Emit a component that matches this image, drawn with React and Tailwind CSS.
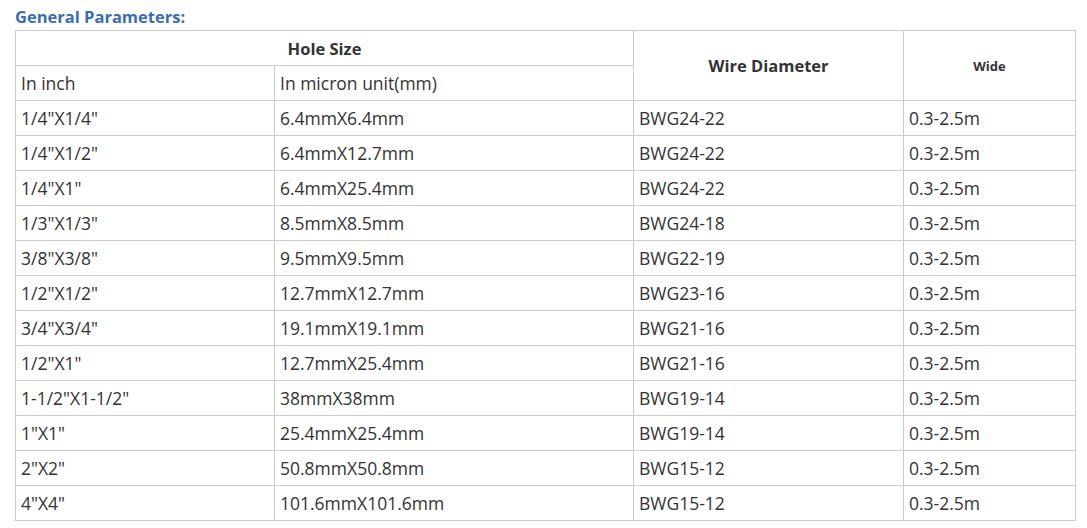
const rows = [
  ['1/4"X1/4"', '6.4mmX6.4mm', 'BWG24-22', '0.3-2.5m'],
  ['1/4"X1/2"', '6.4mmX12.7mm', 'BWG24-22', '0.3-2.5m'],
  ['1/4"X1"', '6.4mmX25.4mm', 'BWG24-22', '0.3-2.5m'],
  ['1/3"X1/3"', '8.5mmX8.5mm', 'BWG24-18', '0.3-2.5m'],
  ['3/8"X3/8"', '9.5mmX9.5mm', 'BWG22-19', '0.3-2.5m'],
  ['1/2"X1/2"', '12.7mmX12.7mm', 'BWG23-16', '0.3-2.5m'],
  ['3/4"X3/4"', '19.1mmX19.1mm', 'BWG21-16', '0.3-2.5m'],
  ['1/2"X1"', '12.7mmX25.4mm', 'BWG21-16', '0.3-2.5m'],
  ['1-1/2"X1-1/2"', '38mmX38mm', 'BWG19-14', '0.3-2.5m'],
  ['1"X1"', '25.4mmX25.4mm', 'BWG19-14', '0.3-2.5m'],
  ['2"X2"', '50.8mmX50.8mm', 'BWG15-12', '0.3-2.5m'],
  ['4"X4"', '101.6mmX101.6mm', 'BWG15-12', '0.3-2.5m'],
]

const cell = 'border border-[#cccccc] h-[35px] px-[5px] pt-[2px] pb-0 align-middle leading-none'

export default function App() {
  return (
    <div className="bg-white min-h-screen pl-[15px] pt-[5px] text-[#333333] font-['Open_Sans',sans-serif]">
      <h2 className="text-[16.5px] leading-[24px] font-bold text-[#3a6db0] m-0">General Parameters:</h2>
      <table className="border-collapse mt-[1px] w-[1060px] table-fixed text-[17.5px]">
        <colgroup>
          <col className="w-[259px]" />
          <col className="w-[359px]" />
          <col className="w-[270px]" />
          <col className="w-[172px]" />
        </colgroup>
        <tbody>
          <tr>
            <td colSpan={2} className={`${cell} text-center font-bold text-[16.5px]`}>Hole Size</td>
            <td rowSpan={2} className={`${cell} text-center font-bold text-[16.5px]`}>Wire Diameter</td>
            <td rowSpan={2} className={`${cell} text-center font-bold text-[13px]`}>Wide</td>
          </tr>
          <tr>
            <td className={cell}>In inch</td>
            <td className={cell}>In micron unit(mm)</td>
          </tr>
          {rows.map((r, i) => (
            <tr key={i}>
              {r.map((c, j) => (
                <td key={j} className={cell}>{c}</td>
              ))}
            </tr>
          ))}
        </tbody>
      </table>
    </div>
  )
}
